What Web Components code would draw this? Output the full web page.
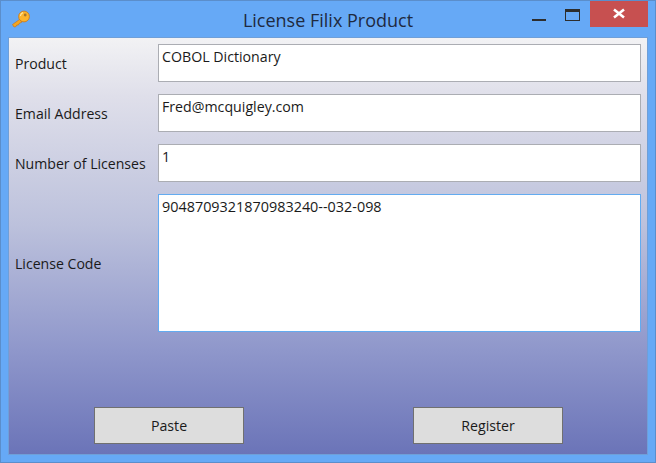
<!DOCTYPE html>
<html>
<head>
<meta charset="utf-8">
<style>
    html, body { margin: 0; padding: 0; }
    body { font-family: "Open Sans", "Noto Sans", sans-serif; color: #1a1a1a; }
</style>
</head>
<body>
<license-window caption="License Filix Product">
    <form-row label="Product"><text-box>COBOL Dictionary</text-box></form-row>
    <form-row label="Email Address"><text-box>Fred@mcquigley.com</text-box></form-row>
    <form-row label="Number of Licenses"><text-box>1</text-box></form-row>
    <form-row label="License Code" tall><text-box focused>9048709321870983240--032-098</text-box></form-row>
    <flat-button slot="actions">Paste</flat-button>
    <flat-button slot="actions">Register</flat-button>
</license-window>

<script>
const windowTemplate = document.createElement("template");
windowTemplate.innerHTML = `
    <style>
        :host {
            display: flex;
            flex-direction: column;
            box-sizing: border-box;
            width: 656px;
            height: 463px;
            background-color: #66a9f6;
            border: 1px solid #5b8ecb;
            padding: 0 7px 7px 7px;
        }
        .titlebar {
            display: grid;
            grid-template-columns: 1fr auto 1fr;
            flex: 0 0 auto;
            height: 36px;
        }
        .key {
            margin: 8px 0 0 3px;
            width: 20px;
            height: 20px;
        }
        .caption {
            text-align: center;
            font-size: 18px;
            line-height: 24px;
            padding-top: 7px;
            color: #1f2a3f;
        }
        .controls {
            display: flex;
            align-items: flex-start;
            justify-content: flex-end;
        }
        .close {
            display: flex;
            width: 58px;
            height: 26px;
            background-color: #c75050;
        }
        .client {
            flex: 1;
            display: flex;
            flex-direction: column;
            border: 1px solid #6f9fd8;
            background: linear-gradient(#f2f2f4 0%, #dfdfea 14%, #bcc1dc 45%, #8f97cb 75%, #6b74b8 100%);
            padding: 6px 6px 10px 6px;
        }
        .rows {
            display: flex;
            flex-direction: column;
            gap: 12px;
        }
        .actions {
            margin-top: auto;
            display: flex;
            gap: 169px;
            padding-left: 79px;
        }
    </style>
    <div class="titlebar">
        <svg class="key" viewBox="0 0 20 20">
            <path d="M1.5 15.5 L8.5 10.5 L11 13 L8 14.6 L7.4 16 L5.8 16 L5 17.6 L3 18 Z" fill="#f5a51e" stroke="#c9771a" stroke-width=".7" stroke-linejoin="round"/>
            <circle cx="13" cy="7.5" r="5.4" fill="#fcb42c" stroke="#c9771a" stroke-width=".8"/>
            <circle cx="14.2" cy="6" r="1.4" fill="#a8762c"/>
            <path d="M9.4 7 A4 4 0 0 1 12 3.6" stroke="#ffe7a0" stroke-width="1.2" fill="none"/>
        </svg>
        <div class="caption" id="caption"></div>
        <div class="controls">
            <svg width="39" height="26" viewBox="0 0 39 26"><rect x="8" y="18" width="14" height="2" fill="#2d2d2d"/></svg>
            <svg width="27" height="26" viewBox="0 0 27 26"><rect x="2.5" y="8.5" width="14" height="11" fill="none" stroke="#2d2d2d"/><rect x="2" y="8" width="15" height="3" fill="#2d2d2d"/></svg>
            <div class="close">
                <svg width="58" height="26" viewBox="0 0 58 26"><path d="M24 8.5 L34 16.5 M34 8.5 L24 16.5" stroke="#fff" stroke-width="2.6"/></svg>
            </div>
        </div>
    </div>
    <div class="client">
        <div class="rows"><slot></slot></div>
        <div class="actions"><slot name="actions"></slot></div>
    </div>
`;

class LicenseWindow extends HTMLElement {
	constructor() {
		super();
		this.attachShadow({ mode: "open" });
		this.shadowRoot.appendChild(windowTemplate.content.cloneNode(true));
		this.shadowRoot.querySelector("#caption").textContent =
			this.getAttribute("caption");
	}
}

const rowTemplate = document.createElement("template");
rowTemplate.innerHTML = `
    <style>
        :host {
            display: flex;
            align-items: center;
            height: 38px;
            font-size: 14.1px;
        }
        :host([tall]) {
            height: 138px;
        }
        .label {
            flex: 0 0 143px;
        }
        .field {
            flex: 1;
            height: 100%;
            display: flex;
        }
    </style>
    <div class="label" id="label"></div>
    <div class="field"><slot></slot></div>
`;

class FormRow extends HTMLElement {
	constructor() {
		super();
		this.attachShadow({ mode: "open" });
		this.shadowRoot.appendChild(rowTemplate.content.cloneNode(true));
		this.shadowRoot.querySelector("#label").textContent =
			this.getAttribute("label");
	}
}

const boxTemplate = document.createElement("template");
boxTemplate.innerHTML = `
    <style>
        :host {
            display: block;
            flex: 1;
            box-sizing: border-box;
            background-color: #fff;
            border: 1px solid #abadb3;
            padding: 2px 3px;
            font-size: 14.2px;
            line-height: 19px;
        }
        :host([focused]) {
            border-color: #63abf0;
            font-size: 14.4px;
        }
    </style>
    <slot></slot>
`;

class TextBox extends HTMLElement {
	constructor() {
		super();
		this.attachShadow({ mode: "open" });
		this.shadowRoot.appendChild(boxTemplate.content.cloneNode(true));
	}
}

const buttonTemplate = document.createElement("template");
buttonTemplate.innerHTML = `
    <style>
        :host {
            display: flex;
            justify-content: center;
            align-items: center;
            box-sizing: border-box;
            width: 150px;
            height: 37px;
            background-color: #dddddd;
            border: 1px solid #707070;
            font-size: 14.2px;
        }
    </style>
    <slot></slot>
`;

class FlatButton extends HTMLElement {
	constructor() {
		super();
		this.attachShadow({ mode: "open" });
		this.shadowRoot.appendChild(buttonTemplate.content.cloneNode(true));
	}
}

window.customElements.define("license-window", LicenseWindow);
window.customElements.define("form-row", FormRow);
window.customElements.define("text-box", TextBox);
window.customElements.define("flat-button", FlatButton);
</script>
</body>
</html>
